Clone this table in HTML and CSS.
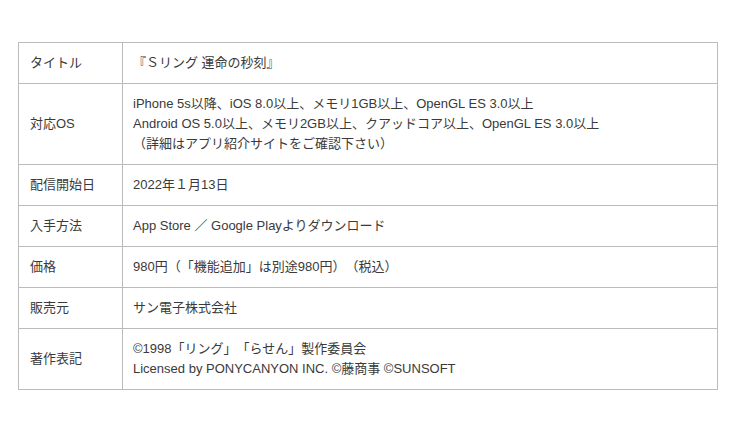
FILE: index.html
```html
<!DOCTYPE html>
<html lang="ja">
<head>
<meta charset="utf-8">
<link rel="stylesheet" href="styles.css">
</head>
<body>
<table class="spec">
  <tr><th>タイトル</th><td>『Ｓリング 運命の秒刻』</td></tr>
  <tr><th>対応OS</th><td>iPhone 5s以降、iOS 8.0以上、メモリ1GB以上、OpenGL ES 3.0以上<br>Android OS 5.0以上、メモリ2GB以上、クアッドコア以上、OpenGL ES 3.0以上<br>（詳細はアプリ紹介サイトをご確認下さい）</td></tr>
  <tr><th>配信開始日</th><td>2022年１月13日</td></tr>
  <tr><th>入手方法</th><td>App Store ／ Google Playよりダウンロード</td></tr>
  <tr><th>価格</th><td>980円（「機能追加」は別途980円）（税込）</td></tr>
  <tr><th>販売元</th><td>サン電子株式会社</td></tr>
  <tr><th>著作表記</th><td>©1998「リング」「らせん」製作委員会<br>Licensed by PONYCANYON INC. ©藤商事 ©SUNSOFT</td></tr>
</table>
</body>
</html>
```
FILE: styles.css
```css
html, body { margin: 0; background: #fff; }
body { padding: 42px 0 0 18px; }
.spec {
  border-collapse: collapse;
  width: 700px;
  font-family: "Liberation Sans", "Noto Sans CJK JP", sans-serif;
  font-size: 13px;
  line-height: 20px;
  color: #3a3a3a;
  text-spacing-trim: space-all;
}
.spec th, .spec td {
  border: 1px solid #bbb;
  padding: 10px 10px;
  text-align: left;
  font-weight: normal;
  vertical-align: middle;
}
.spec th { width: 82px; padding-left: 11px; }
```
